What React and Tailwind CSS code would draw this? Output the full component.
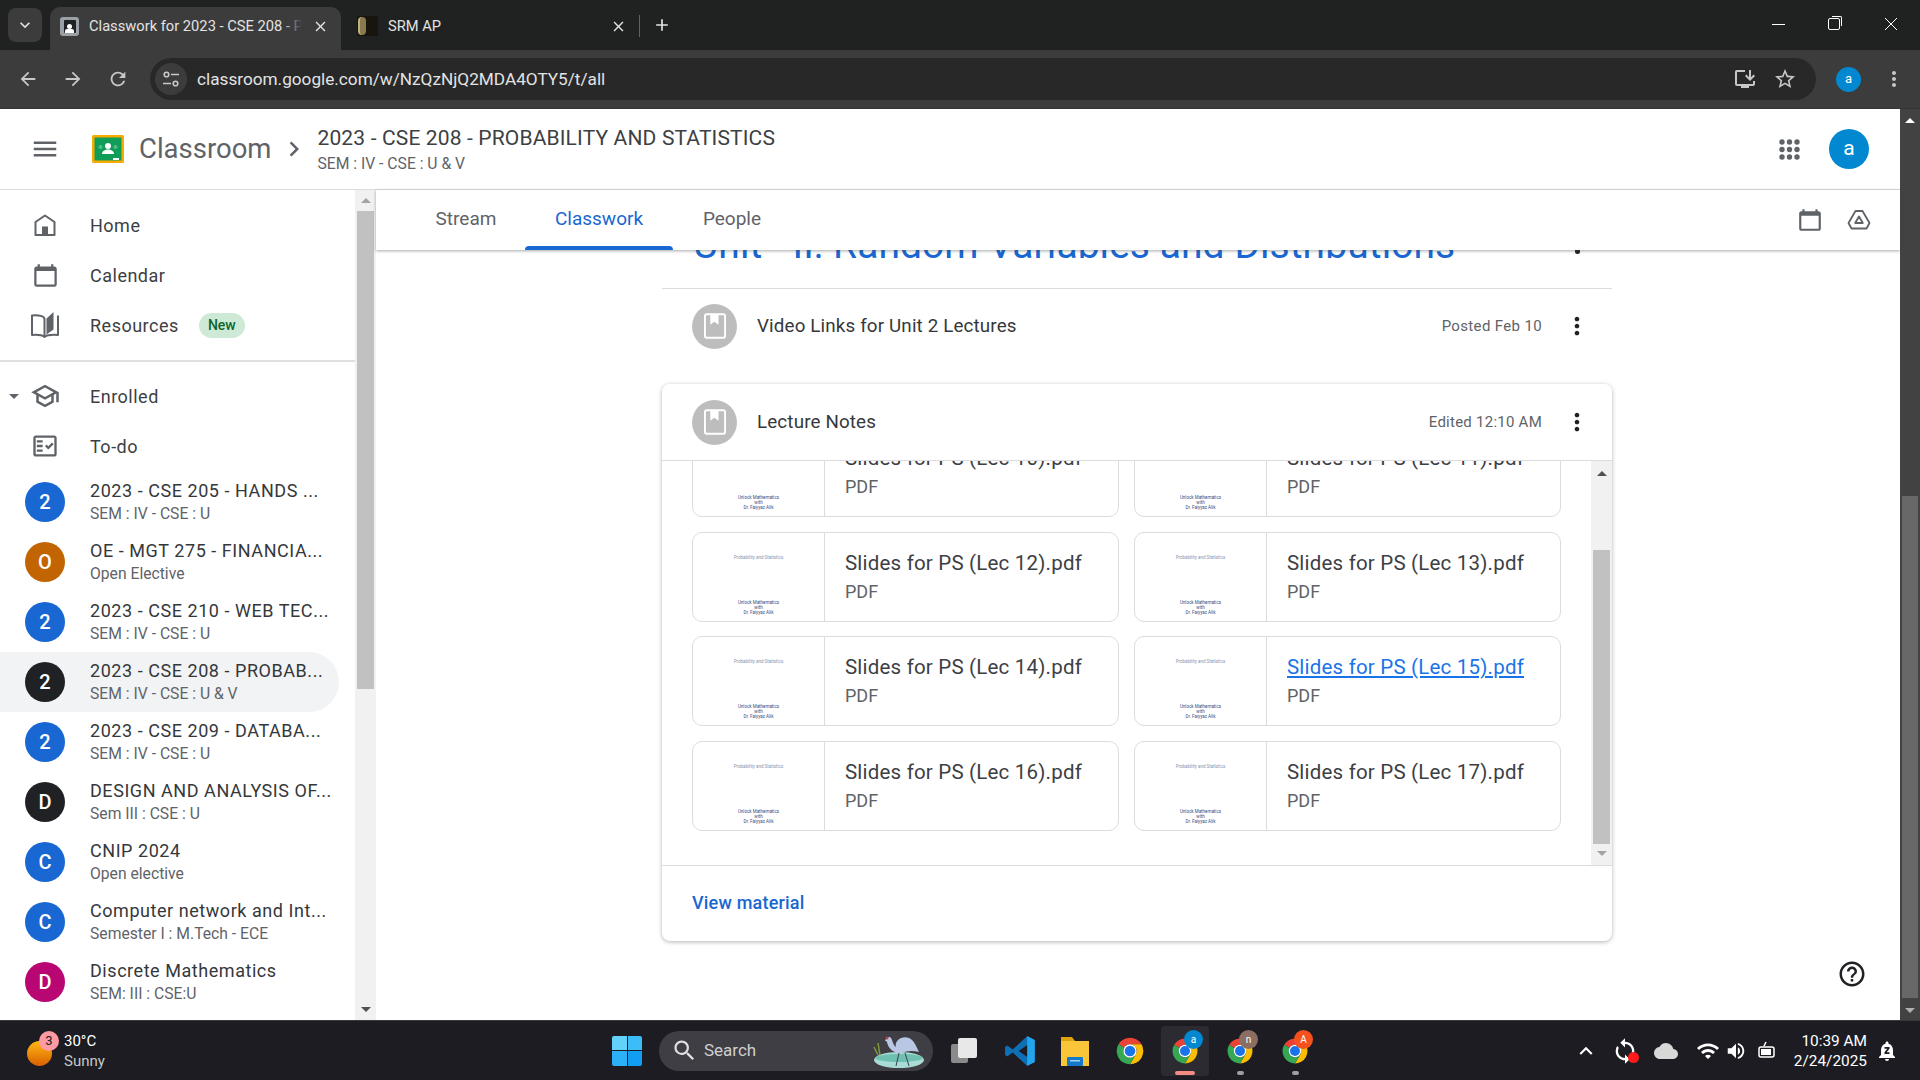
import React from 'react';
import {
  MdArrowBack, MdArrowForward, MdRefresh, MdClose, MdAdd, MdKeyboardArrowDown, MdOutlineInstallDesktop,
  MdStarBorder, MdMoreVert, MdMenu, MdChevronRight, MdOutlineSchool,
  MdOutlineFactCheck, MdHelpOutline, MdSearch, MdKeyboardArrowUp, MdWifi, MdVolumeUp, MdSync, MdCloud, MdNotificationsPaused,
} from 'react-icons/md';

const FONT = "font-['Roboto','Liberation_Sans',sans-serif]";

const courses = [
  { letter: '2', title: '2023 - CSE 205 - HANDS ...', sub: 'SEM : IV - CSE : U', bg: 'bg-[#1967d2]' },
  { letter: 'O', title: 'OE - MGT 275 - FINANCIA...', sub: 'Open Elective', bg: 'bg-[#c26401]' },
  { letter: '2', title: '2023 - CSE 210 - WEB TEC...', sub: 'SEM : IV - CSE : U', bg: 'bg-[#1967d2]' },
  { letter: '2', title: '2023 - CSE 208 - PROBAB...', sub: 'SEM : IV - CSE : U & V', bg: 'bg-[#202124]', active: true },
  { letter: '2', title: '2023 - CSE 209 - DATABA...', sub: 'SEM : IV - CSE : U', bg: 'bg-[#1967d2]' },
  { letter: 'D', title: 'DESIGN AND ANALYSIS OF...', sub: 'Sem III : CSE : U', bg: 'bg-[#202124]' },
  { letter: 'C', title: 'CNIP 2024', sub: 'Open elective', bg: 'bg-[#1967d2]' },
  { letter: 'C', title: 'Computer network and Int...', sub: 'Semester I : M.Tech - ECE', bg: 'bg-[#1967d2]' },
  { letter: 'D', title: 'Discrete Mathematics', sub: 'SEM: III : CSE:U', bg: 'bg-[#b80672]' },
];

const files = [
  { name: 'Slides for PS (Lec 10).pdf' },
  { name: 'Slides for PS (Lec 11).pdf' },
  { name: 'Slides for PS (Lec 12).pdf' },
  { name: 'Slides for PS (Lec 13).pdf' },
  { name: 'Slides for PS (Lec 14).pdf' },
  { name: 'Slides for PS (Lec 15).pdf', hover: true },
  { name: 'Slides for PS (Lec 16).pdf' },
  { name: 'Slides for PS (Lec 17).pdf' },
];

function CalendarIcon({ size = 24 }) {
  return (
    <svg width={size} height={size} viewBox="0 0 24 24" fill="#5f6368">
      <path d="M20 4h-1V2h-2v2H7V2H5v2H4C2.900 4 2 4.900 2 6v14c0 1.100.9 2 2 2h16c1.100 0 2-.9 2-2V6c0-1.100-.9-2-2-2zm0 16H4V8h16v12z" />
    </svg>
  );
}

function DriveIcon() {
  return (
    <svg width="24" height="24" viewBox="0 0 24 24" fill="none" stroke="#5f6368" strokeWidth="1.800" strokeLinejoin="round">
      <path d="M8.500 3h7l7 12-3 5.500h-15L1.500 15z" />
      <path d="M12 8.500l-3.800 6.500h7.600z" />
    </svg>
  );
}

function HomeIcon() {
  return (
    <svg width="26" height="26" viewBox="0 0 26 26" fill="none">
      <path d="M13 3.500 3.500 10v13h19V10z" stroke="#5f6368" strokeWidth="2" strokeLinejoin="round" />
      <rect x="10" y="14.500" width="6" height="8.500" fill="#5f6368" />
    </svg>
  );
}

function BookIcon() {
  return (
    <svg width="30" height="28" viewBox="0 0 30 28" fill="none">
      <path d="M14.500 7C12 4.500 8 4 2 4.500V24c6-.5 10 0 12.500 2 2.500-2 6.500-2.500 13.500-2V4.500" stroke="#5f6368" strokeWidth="2" strokeLinejoin="round" />
      <path d="M14.500 7v19" stroke="#5f6368" strokeWidth="2" />
      <path d="M16.500 7.500 23.500 1v17.500l-7 5z" fill="#5f6368" />
    </svg>
  );
}

function AppsIcon() {
  return (
    <svg width="21" height="21" viewBox="0 0 21 21" fill="#5f6368">
      {[3, 10.500, 18].flatMap(y => [3, 10.500, 18].map(x => <circle key={`${x}-${y}`} cx={x} cy={y} r="2.700" />))}
    </svg>
  );
}

function SiteInfoIcon() {
  return (
    <svg width="18" height="18" viewBox="0 0 18 18" fill="none" stroke="#c7c7c7" strokeWidth="1.600">
      <circle cx="4.500" cy="4.500" r="2.300" />
      <path d="M9 4.500h8M1 13.500h8" />
      <circle cx="13.500" cy="13.500" r="2.300" />
    </svg>
  );
}

function ChromeIcon({ size = 30 }) {
  return (
    <svg width={size} height={size} viewBox="0 0 48 48">
      <path fill="#ea4335" d="M6.680 14A20 20 0 0 1 41.320 14H24A10 10 0 0 0 15.340 19Z" />
      <path fill="#fbbc04" d="M41.320 14A20 20 0 0 1 24 44L32.660 29A10 10 0 0 0 24 14Z" />
      <path fill="#34a853" d="M6.680 14A20 20 0 0 0 24 44L32.660 29A10 10 0 0 1 15.340 19Z" />
      <circle cx="24" cy="24" r="10" fill="#fff" />
      <circle cx="24" cy="24" r="8" fill="#1a73e8" />
    </svg>
  );
}

function BookmarkBadge() {
  return (
    <div className="w-[45px] h-[45px] rounded-full bg-[#bdbdbd] flex items-center justify-center shrink-0">
      <svg width="24" height="26" viewBox="0 0 20 22" fill="none">
        <rect x="1.500" y="1" width="17" height="20" rx="1.500" stroke="#fff" strokeWidth="1.600" />
        <path d="M6 1h7v9l-3.500-2.500L6 10z" fill="#fff" />
      </svg>
    </div>
  );
}

function UpArrow({ color = 'border-b-[#a3a3a3]' }) {
  return <div className={`w-0 h-0 border-x-[5px] border-x-transparent border-b-[5px] ${color}`} />;
}

function DownArrow({ color = 'border-t-[#505050]' }) {
  return <div className={`w-0 h-0 border-x-[5px] border-x-transparent border-t-[5px] ${color}`} />;
}

function Thumb() {
  return (
    <div className="w-[132px] shrink-0 border-r border-[#dadce0] flex flex-col items-center justify-between pt-[22px] pb-[6px] text-[4.500px] leading-[5px] text-[#3c4a7d]">
      <div className="text-[#8a93ad]">Probability and Statistics</div>
      <div className="text-center">
        <div>Unlock Mathematics</div>
        <div>with</div>
        <div>Dr. Faiyyaz Alik</div>
      </div>
    </div>
  );
}

function FileCard({ file }) {
  return (
    <div className="h-[90px] border border-[#dadce0] rounded-[10px] flex overflow-hidden bg-white">
      <Thumb />
      <div className="pl-[20px] pt-[15px] min-w-0">
        <div className={`text-[20.500px] leading-[30px] tracking-[0.2px] whitespace-nowrap ${file.hover ? 'text-[#1a73e8] underline' : 'text-[#3c4043]'}`}>{file.name}</div>
        <div className="text-[18px] leading-[28px] text-[#5f6368]">PDF</div>
      </div>
    </div>
  );
}

function TabBar() {
  return (
    <div className="h-[50px] bg-[#202221] flex items-end pl-[8px] shrink-0 text-[#e3e3e3]">
      <div className="w-[34px] h-[34px] rounded-lg bg-[#3c3c3c] mb-[8px] flex items-center justify-center mr-[8px]">
        <MdKeyboardArrowDown size={20} />
      </div>
      <div className="w-[291px] h-[43px] bg-[#3c3c3c] rounded-t-[10px] flex items-center pl-[10px] pr-[12px] pb-[5px] text-[14.700px]">
        <div className="w-[19px] h-[19px] rounded-[3px] bg-[#9aa0a6] flex items-center justify-center mr-[10px] shrink-0">
          <div className="w-[12px] h-[13px] bg-[#202124] rounded-[1px] flex flex-col items-center justify-end">
            <div className="w-[5px] h-[5px] rounded-full bg-white" />
            <div className="w-[9px] h-[4px] bg-white rounded-t-[2px]" />
          </div>
        </div>
        <div className="flex-1 whitespace-nowrap overflow-hidden relative">
          Classwork for 2023 - CSE 208 - P
          <div className="absolute right-0 top-0 bottom-0 w-[20px] bg-gradient-to-l from-[#3c3c3c] to-transparent" />
        </div>
        <MdClose size={17} className="ml-[10px] shrink-0" />
      </div>
      <div className="w-[298px] h-[43px] flex items-center pl-[16px] pr-[12px] pb-[5px] text-[14.700px]">
        <div className="w-[21px] h-[20px] bg-[#17150d] flex items-center pl-[1px] mr-[10px] shrink-0">
          <div className="w-[8px] h-[18px] rounded-full bg-[#8a7a4d] border-l-2 border-[#c2b280]" />
        </div>
        <div className="flex-1 whitespace-nowrap">SRM AP</div>
        <MdClose size={17} />
      </div>
      <div className="w-px h-[22px] bg-[#5f6368] mb-[13px]" />
      <div className="ml-[12px] mb-[15px]"><MdAdd size={20} /></div>
      <div className="ml-auto h-full flex text-white items-center pb-[2px]">
        <div className="w-[56px] flex justify-center"><div className="w-[13px] h-px bg-white" /></div>
        <div className="w-[56px] flex justify-center">
          <div className="w-[12px] h-[12px] border border-white rounded-[2px] relative">
            <div className="absolute -top-[3px] -right-[3px] w-[10px] h-[10px] border-t border-r border-white rounded-tr-[2px]" />
          </div>
        </div>
        <div className="w-[58px] flex justify-center">
          <svg width="14" height="14" viewBox="0 0 14 14" stroke="#fff" strokeWidth="1"><path d="M1 1l12 12M13 1L1 13" /></svg>
        </div>
      </div>
    </div>
  );
}

function Toolbar() {
  return (
    <div className="h-[59px] bg-[#3c3c3c] flex items-center shrink-0 text-[#c7c7c7] border-b border-[#333]">
      <div className="w-[150px] flex items-center pl-[17px] gap-[23px] shrink-0">
        <MdArrowBack size={22} />
        <MdArrowForward size={22} />
        <MdRefresh size={22} />
      </div>
      <div className="w-[1666px] h-[42px] rounded-full bg-[#282828] flex items-center pl-[5px] pr-[17px] shrink-0">
        <div className="w-[32px] h-[32px] rounded-full bg-[#3c3c3c] flex items-center justify-center mr-[10px]">
          <SiteInfoIcon />
        </div>
        <div className="text-[17.200px] text-[#e3e3e3] flex-1 pt-[2px]">classroom.google.com/w/NzQzNjQ2MDA4OTY5/t/all</div>
        <MdOutlineInstallDesktop size={24} className="mr-[16px]" />
        <MdStarBorder size={24} className="mr-[2px]" />
      </div>
      <div className="w-[25px] h-[25px] rounded-full bg-[#0288d1] text-white text-[13px] flex items-center justify-center ml-[20px] shrink-0">a</div>
      <MdMoreVert size={24} className="ml-[21px] shrink-0" />
    </div>
  );
}

function ClassroomHeader() {
  return (
    <div className="h-[81px] border-b border-[#dadce0] flex items-center shrink-0 bg-white">
      <MdMenu size={30} className="ml-[30px] text-[#5f6368] shrink-0" />
      <svg width="32" height="28" viewBox="0 0 32 28" className="ml-[32px] shrink-0">
        <rect width="32" height="28" rx="1.500" fill="#f9ab00" />
        <rect x="2.500" y="2.500" width="27" height="23" fill="#0f9d58" />
        <circle cx="16" cy="11" r="3" fill="#fff" />
        <path d="M10 19c0-3 3-4.500 6-4.500s6 1.500 6 4.500z" fill="#fff" />
        <circle cx="8.500" cy="12" r="2" fill="#57bb8a" />
        <circle cx="23.500" cy="12" r="2" fill="#57bb8a" />
        <rect x="21" y="23" width="6" height="2" fill="#fff" />
      </svg>
      <div className="ml-[15px] text-[27.500px] text-[#5f6368] leading-none">Classroom</div>
      <MdChevronRight size={30} className="ml-[8px] text-[#5f6368]" />
      <div className="ml-[8px]">
        <div className="text-[21px] tracking-[0.15px] leading-[28px] text-[#3c4043]">2023 - CSE 208 - PROBABILITY AND STATISTICS</div>
        <div className="text-[15.700px] leading-[20px] mt-[2px] text-[#5f6368]">SEM : IV - CSE : U &amp; V</div>
      </div>
      <div className="ml-auto"><AppsIcon /></div>
      <div className="w-[40px] h-[40px] rounded-full bg-[#0288d1] text-white text-[21px] flex items-center justify-center ml-[29px] mr-[31px]">a</div>
    </div>
  );
}

function NavRow({ icon, label, children, arrow }) {
  return (
    <div className="h-[50px] flex items-center relative text-[#3c4043]">
      {arrow && <div className="absolute left-[9px] top-[23px]"><DownArrow color="border-t-[#5f6368]" /></div>}
      <div className="w-[90px] flex justify-center shrink-0 text-[#5f6368]">{icon}</div>
      <div className="text-[18px] tracking-[0.5px]">{label}</div>
      {children}
    </div>
  );
}

function Sidebar() {
  return (
    <div className="w-[376px] flex shrink-0 h-full">
      <div className="w-[355px] pt-[10px] overflow-hidden">
        <NavRow icon={<HomeIcon />} label="Home" />
        <NavRow icon={<CalendarIcon size={27} />} label="Calendar" />
        <NavRow icon={<BookIcon />} label="Resources">
          <div className="ml-[20px] w-[46px] h-[25px] rounded-full bg-[#ceead6] text-[#0d652d] text-[14px] font-medium flex items-center justify-center">New</div>
        </NavRow>
        <div className="h-[2px] bg-[#e0e0e0] mt-[10px] mb-[9px]" />
        <NavRow arrow icon={<MdOutlineSchool size={30} />} label="Enrolled" />
        <NavRow icon={<MdOutlineFactCheck size={28} />} label="To-do" />
        {courses.map((c, i) => (
          <div key={i} className={`h-[60px] w-[339px] flex items-center rounded-r-full ${c.active ? 'bg-[#f1f3f4]' : ''} ${i === 0 ? 'mt-[1px]' : ''}`}>
            <div className={`w-[40px] h-[40px] rounded-full ml-[25px] mr-[25px] shrink-0 text-white text-[20px] font-medium flex items-center justify-center ${c.bg}`}>{c.letter}</div>
            <div className="min-w-0 whitespace-nowrap">
              <div className="text-[18px] leading-[23px] -mt-[1px] tracking-[0.55px] text-[#35383b]">{c.title}</div>
              <div className="text-[15.700px] leading-[20px] mt-[2px] text-[#5f6368]">{c.sub}</div>
            </div>
          </div>
        ))}
      </div>
      <div className="w-[21px] bg-[#f1f1f1] flex flex-col items-center">
        <div className="h-[21px] flex items-center justify-center"><UpArrow /></div>
        <div className="w-[17px] h-[478px] bg-[#c1c1c1]" />
        <div className="mt-auto h-[21px] flex items-center justify-center"><DownArrow /></div>
      </div>
    </div>
  );
}

function ClassTabs() {
  const tabs = [
    { label: 'Stream', w: 'w-[148px] pl-[30px]' },
    { label: 'Classwork', w: 'w-[148px]', active: true },
    { label: 'People', w: 'w-[118px]' },
  ];
  return (
    <div className="h-[60px] bg-white shadow-[0_1px_3px_rgba(60,64,67,0.45)] relative z-10 flex shrink-0 pl-[1px]">
      {tabs.map(t => (
        <div key={t.label} className={`${t.w} relative flex items-center justify-center pb-[1px] text-[19px] ${t.active ? 'text-[#1967d2]' : 'text-[#5f6368]'}`}>
          {t.label}
          {t.active && <div className="absolute bottom-0 left-0 right-0 h-[4px] rounded-t-[4px] bg-[#1967d2]" />}
        </div>
      ))}
      <div className="ml-auto flex items-center gap-[24px] pr-[29px]">
        <CalendarIcon size={26} />
        <DriveIcon />
      </div>
    </div>
  );
}

function Classwork() {
  return (
    <div className="flex-1 min-h-0 relative overflow-hidden bg-white">
      <div className="w-[950px] ml-[286px]">
        <div className="h-[39px] relative overflow-hidden border-b border-[#dadce0]">
          <div className="absolute left-[31px] -top-[27px] text-[39px] tracking-[0.05px] leading-[44px] text-[#1967d2] whitespace-nowrap">Unit - II: Random Variables and Distributions</div>
          <div className="absolute left-[913px] top-0 w-[5px] h-[4px] rounded-b-full bg-[#202124]" />
        </div>
        <div className="h-[74px] flex items-center pl-[30px] pr-[21px]">
          <BookmarkBadge />
          <div className="ml-[20px] text-[18.800px] tracking-[0.15px] text-[#35383b] flex-1">Video Links for Unit 2 Lectures</div>
          <div className="text-[15px] tracking-[0.35px] text-[#5f6368] mr-[21px]">Posted Feb 10</div>
          <MdMoreVert size={28} className="text-[#202124]" />
        </div>

        <div className="mt-[21px] h-[557px] rounded-lg bg-white shadow-[0_1px_4px_rgba(60,64,67,0.4)] flex flex-col overflow-hidden">
          <div className="h-[77px] flex items-center pl-[30px] pr-[21px] border-b border-[#dadce0] shrink-0 relative z-[1] bg-white">
            <BookmarkBadge />
            <div className="ml-[20px] text-[18.800px] tracking-[0.15px] text-[#35383b] flex-1">Lecture Notes</div>
            <div className="text-[15px] tracking-[0.25px] text-[#5f6368] mr-[21px]">Edited 12:10 AM</div>
            <MdMoreVert size={28} className="text-[#202124]" />
          </div>
          <div className="h-[405px] flex border-b border-[#dadce0] shrink-0">
            <div className="flex-1 overflow-hidden pl-[30px] pr-[30px]">
              <div className="grid grid-cols-2 gap-x-[15px] gap-y-[14.500px] -mt-[34px]">
                {files.map(f => <FileCard key={f.name} file={f} />)}
              </div>
            </div>
            <div className="w-[21px] bg-[#f1f1f1] flex flex-col items-center">
              <div className="h-[22px] mt-[1px] flex items-center justify-center"><UpArrow color="border-b-[#505050]" /></div>
              <div className="w-[17px] h-[294px] bg-[#c1c1c1] mt-[66px]" />
              <div className="h-[18px] flex items-center justify-center"><DownArrow color="border-t-[#a3a3a3]" /></div>
            </div>
          </div>
          <div className="flex-1 flex items-center pl-[30px] pb-[2px] text-[18px] font-medium tracking-[0.2px] text-[#1967d2]">View material</div>
        </div>
      </div>
      <MdHelpOutline size={30} className="absolute right-[33px] bottom-[31px] text-[#202124]" />
    </div>
  );
}

function Bird() {
  return (
    <svg width="54" height="36" viewBox="0 0 54 36">
      <ellipse cx="28" cy="27" rx="25" ry="8" fill="#a8dcd4" />
      <ellipse cx="28" cy="25" rx="24" ry="4" fill="#6fc0b0" />
      <path d="M14 8c2-5 6-5 7-1 1 3 2 6 4 7-2-6 6-12 13-9 5 2 7 8 10 14-7-2-12-1-18 1-6 1-13-4-14-11l-1-1z" fill="#b9c6e4" />
      <path d="M28 20l-3 13M34 20l4 13" stroke="#3a3f55" strokeWidth="1" />
      <path d="M7 10l2 12M3 14l4 8" stroke="#7f9a3a" strokeWidth="1.500" />
      <circle cx="16" cy="5" r="1.500" fill="#b24a4a" />
    </svg>
  );
}

function FolderIcon() {
  return (
    <svg width="32" height="32" viewBox="0 0 32 32">
      <path d="M2 2h11l3 4H2z" fill="#e0a30c" />
      <path d="M2 6h28v25H2z" fill="#fbc53a" />
      <rect x="8" y="22" width="16" height="9" rx="1" fill="#1479c9" />
      <rect x="11" y="25" width="10" height="1.500" fill="#9fd3f5" />
    </svg>
  );
}

function VsCodeIcon() {
  return (
    <svg width="32" height="34" viewBox="0 0 24 24">
      <path d="M1 9l1.500-1 4 3.100L17.500 1 23 3.700v16.600L17.500 23 6.500 12.900l-4 3.100L1 15z" fill="#1a8fdc" />
      <path d="M17.500 1 6.500 11.100 2.500 8 1 9v6l1.500 1 4-3.100L17.500 23z" fill="#0d6fb5" />
      <path d="M17.500 7.500 11 12l6.500 4.500z" fill="#1c1c22" />
      <path d="M17.500 1 23 3.700v16.600L17.500 23z" fill="#23a5ee" />
    </svg>
  );
}

function TaskChrome({ badge, badgeBg, bar, box }) {
  return (
    <div className={`w-[48px] h-[50px] relative flex items-center justify-center rounded-[4px] ${box ? 'bg-[#2b2b31]' : ''}`}>
      <ChromeIcon size={30} />
      {badge && <div className={`absolute top-[4px] right-[6px] w-[19px] h-[19px] rounded-full text-[10px] text-white flex items-center justify-center ${badgeBg}`}>{badge}</div>}
      {bar && <div className={`absolute bottom-[1px] rounded-full ${bar}`} />}
    </div>
  );
}

function Taskbar() {
  return (
    <div className="h-[60px] bg-[#1c1c22] border-t border-[#3a3a3e] flex items-center shrink-0 relative text-white">
      <div className="w-[470px] shrink-0 flex items-center pl-[27px]">
        <div className="relative w-[37px] h-[40px] shrink-0">
          <div className="absolute left-0 top-[10px] w-[25px] h-[25px] rounded-full bg-gradient-to-b from-[#fdb813] to-[#d95f02]" />
          <div className="absolute left-[12px] top-0 w-[20px] h-[20px] rounded-full bg-[#ff9aa2] text-[#202124] text-[13px] flex items-center justify-center">3</div>
        </div>
        <div className="text-[15px] leading-[20px]">
          <div>30°C</div>
          <div className="text-[#c8c8c8]">Sunny</div>
        </div>
      </div>
      <div className="grid grid-cols-2 gap-[1px] w-[30px] h-[30px] ml-[142px] shrink-0 rounded-[2px] overflow-hidden">
        <div className="bg-[#62d2fb]" /><div className="bg-[#3cbdf8]" /><div className="bg-[#2cb1f6]" /><div className="bg-[#119df2]" />
      </div>
      <div className="w-[274px] h-[40px] ml-[17px] rounded-full bg-[#3e3e44] flex items-center pl-[12px] pr-[8px] shrink-0">
        <MdSearch size={27} className="text-[#e0e0e0] shrink-0" />
        <div className="ml-[6px] text-[17px] text-[#d0d0d0] flex-1">Search</div>
        <Bird />
      </div>
      <div className="w-[26px] h-[26px] ml-[18px] relative shrink-0">
        <div className="absolute left-0 top-[6px] w-[17px] h-[19px] bg-[#8a8a8a] rounded-[2px]" />
        <div className="absolute right-0 top-0 w-[19px] h-[20px] bg-[#e8e8e8] rounded-[2px]" />
      </div>
      <div className="ml-[27px] shrink-0"><VsCodeIcon /></div>
      <div className="ml-[23px] shrink-0"><FolderIcon /></div>
      <div className="ml-[23px] shrink-0"><ChromeIcon size={32} /></div>
      <div className="ml-[15px] shrink-0"><TaskChrome box badge="a" badgeBg="bg-[#0288d1]" bar="w-[20px] h-[4px] bg-[#f28b82]" /></div>
      <div className="ml-[7px] shrink-0"><TaskChrome badge="n" badgeBg="bg-[#8d6e63]" bar="w-[7px] h-[4px] bg-[#9aa0a6]" /></div>
      <div className="ml-[7px] shrink-0"><TaskChrome badge="A" badgeBg="bg-[#f4511e]" bar="w-[7px] h-[4px] bg-[#9aa0a6]" /></div>

      <div className="ml-auto flex items-center pr-[21px]">
        <MdKeyboardArrowUp size={26} />
        <div className="relative ml-[12px]">
          <MdSync size={28} />
          <div className="absolute right-0 bottom-[2px] w-[11px] h-[11px] rounded-full bg-[#ff1b1b]" />
        </div>
        <MdCloud size={24} className="ml-[15px] text-[#d8d8d8]" />
        <MdWifi size={24} className="ml-[18px]" />
        <MdVolumeUp size={22} className="ml-[5px]" />
        <svg width="22" height="24" viewBox="0 0 22 24" className="ml-[9px]" fill="none" stroke="#fff" strokeWidth="1.500">
          <rect x="3" y="8" width="15" height="10" rx="2" />
          <rect x="5" y="10" width="10" height="6" fill="#fff" stroke="none" />
          <path d="M8 7l2-4" />
        </svg>
        <div className="ml-[16px] text-[15.400px] leading-[20px] text-right whitespace-nowrap">
          <div>10:39 AM</div>
          <div>2/24/2025</div>
        </div>
        <MdNotificationsPaused size={24} className="ml-[8px]" />
      </div>
    </div>
  );
}

export default function App() {
  return (
    <div className={`w-[1920px] h-[1080px] flex flex-col overflow-hidden bg-white ${FONT}`}>
      <TabBar />
      <Toolbar />
      <div className="h-[911px] flex shrink-0 min-h-0">
        <div className="flex-1 flex flex-col min-w-0">
          <ClassroomHeader />
          <div className="flex-1 flex min-h-0">
            <Sidebar />
            <div className="flex-1 flex flex-col min-w-0">
              <ClassTabs />
              <Classwork />
            </div>
          </div>
        </div>
        <div className="w-[20px] bg-[#424242] flex flex-col items-center shrink-0">
          <div className="h-[22px] flex items-center justify-center"><UpArrow color="border-b-white" /></div>
          <div className="w-[16px] h-[502px] mt-[365px] bg-[#686868]" />
          <div className="mt-auto h-[20px] flex items-center justify-center"><DownArrow color="border-t-[#b0b0b0]" /></div>
        </div>
      </div>
      <Taskbar />
    </div>
  );
}
